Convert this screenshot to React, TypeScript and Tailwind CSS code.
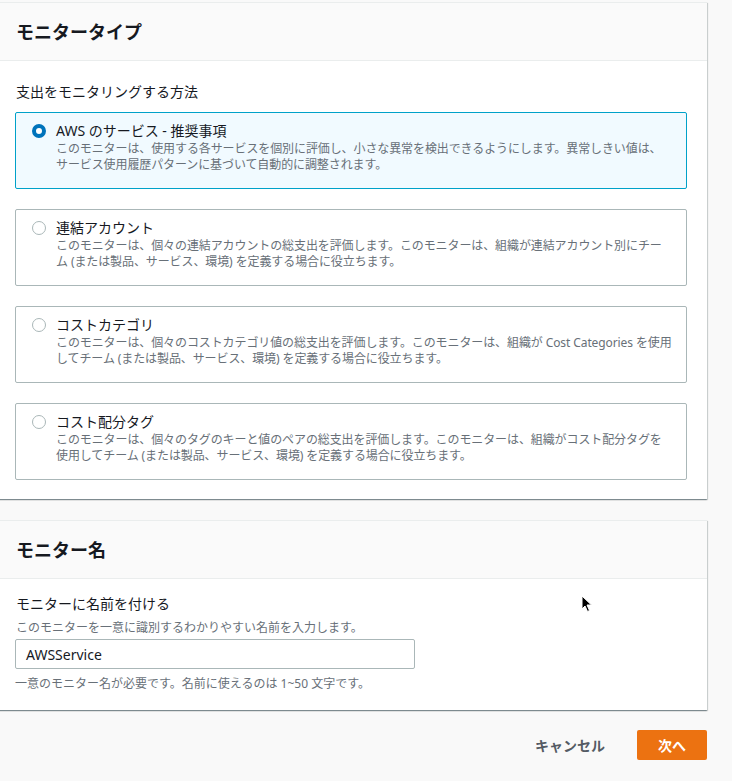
import React from "react";

const FONT = '"Noto Sans", "Noto Sans CJK JP", sans-serif';

type Opt = { title: string; desc: React.ReactNode; selected?: boolean };

const options: Opt[] = [
  {
    title: "AWS のサービス - 推奨事項",
    desc: (
      <>
        このモニターは、使用する各サービスを個別に評価し、小さな異常を検出できるようにします。異常しきい値は、
        <br />
        サービス使用履歴パターンに基づいて自動的に調整されます。
      </>
    ),
    selected: true,
  },
  {
    title: "連結アカウント",
    desc: (
      <>
        このモニターは、個々の連結アカウントの総支出を評価します。このモニターは、組織が連結アカウント別にチー
        <br />
        ム (または製品、サービス、環境) を定義する場合に役立ちます。
      </>
    ),
  },
  {
    title: "コストカテゴリ",
    desc: (
      <>
        このモニターは、個々のコストカテゴリ値の総支出を評価します。このモニターは、組織が Cost Categories を使用
        <br />
        してチーム (または製品、サービス、環境) を定義する場合に役立ちます。
      </>
    ),
  },
  {
    title: "コスト配分タグ",
    desc: (
      <>
        このモニターは、個々のタグのキーと値のペアの総支出を評価します。このモニターは、組織がコスト配分タグを
        <br />
        使用してチーム (または製品、サービス、環境) を定義する場合に役立ちます。
      </>
    ),
  },
];

function Radio({ selected }: { selected?: boolean }) {
  if (selected) {
    return (
      <span className="mt-[3px] box-border block h-[14px] w-[14px] shrink-0 rounded-full border-[4px] border-[#0073bb] bg-white" />
    );
  }
  return (
    <span className="mt-[3px] box-border block h-[14px] w-[14px] shrink-0 rounded-full border border-[#aab7b8] bg-white" />
  );
}

function Tile({ o }: { o: Opt }) {
  return (
    <div
      className={
        "flex gap-[10px] rounded-[2px] border pl-4 pr-4 pt-[8px] pb-[15px] " +
        (o.selected ? "border-[#00a1c9] bg-[#f1faff]" : "border-[#aab7b8] bg-white")
      }
    >
      <Radio selected={o.selected} />
      <div className="min-w-0">
        <div className="text-[14px] leading-[20px] text-[#16191f]">{o.title}</div>
        <div className="whitespace-nowrap text-[12px] leading-[16px] tracking-[-0.1px] text-[#687078]">
          {o.desc}
        </div>
      </div>
    </div>
  );
}

const cardShadow =
  "shadow-[0_1px_1px_0_rgba(0,28,36,0.3),1px_1px_1px_0_rgba(0,28,36,0.15),-1px_1px_1px_0_rgba(0,28,36,0.15)]";

export default function App() {
  return (
    <div
      className="relative min-h-[781px] w-[732px] overflow-hidden bg-[#f9f9f9] pt-[2px]"
      style={{ fontFamily: FONT }}
    >
      <div className="w-[708px] -ml-px">
        {/* Card 1 */}
        <div className={"border-t border-[#eaeded] bg-white " + cardShadow}>
          <div className="flex h-[58px] items-center border-b border-[#eaeded] bg-[#fafafa] pl-[17px]">
            <h2 className="text-[18px] font-bold leading-[22px] text-[#16191f]">モニタータイプ</h2>
          </div>
          <div className="pl-[16px] pr-[20px] pt-[21px] pb-[19px]">
            <div className="mb-[10px] pl-px text-[14px] leading-[20px] text-[#16191f]">
              支出をモニタリングする方法
            </div>
            <div className="flex flex-col gap-[20px]">
              {options.map((o, i) => (
                <Tile key={i} o={o} />
              ))}
            </div>
          </div>
        </div>

        {/* Card 2 */}
        <div className={"mt-[21px] border-t border-[#eaeded] bg-white " + cardShadow}>
          <div className="flex h-[58px] items-center border-b border-[#eaeded] bg-[#fafafa] pl-[17px]">
            <h2 className="text-[18px] font-bold leading-[22px] text-[#16191f]">モニター名</h2>
          </div>
          <div className="px-[16px] pt-[15px] pb-[18px]">
            <div className="pl-px text-[14px] leading-[20px] text-[#16191f]">モニターに名前を付ける</div>
            <div className="mt-[6px] pl-px text-[12px] leading-[16px] text-[#687078]">
              このモニターを一意に識別するわかりやすい名前を入力します。
            </div>
            <div className="mt-[3px] flex h-[30px] w-[400px] items-center rounded-[2px] border border-[#aab7b8] bg-white pl-[10px] text-[14px] text-[#16191f]">
              AWSService
            </div>
            <div className="mt-[7px] text-[12px] leading-[16px] text-[#687078]">
              一意のモニター名が必要です。名前に使えるのは 1~50 文字です。
            </div>
          </div>
        </div>

        {/* Actions */}
        <div className="mt-[20px] flex items-center justify-end">
          <button className="mr-[12px] h-[30px] px-[20px] text-[14px] font-bold text-[#545b64]">
            キャンセル
          </button>
          <button className="h-[30px] w-[70px] rounded-[2px] bg-[#ec7211] text-[14px] font-bold text-white">
            次へ
          </button>
        </div>
      </div>

      {/* mouse cursor */}
      <svg
        className="absolute left-[581px] top-[595px]"
        width="12"
        height="18"
        viewBox="0 0 12 18"
      >
        <path
          d="M1 1 L1 14 L4 11 L6.5 16.5 L8.5 15.5 L6 10 L10.5 10 Z"
          fill="#000"
          stroke="#fff"
          strokeWidth="1"
        />
      </svg>
    </div>
  );
}
